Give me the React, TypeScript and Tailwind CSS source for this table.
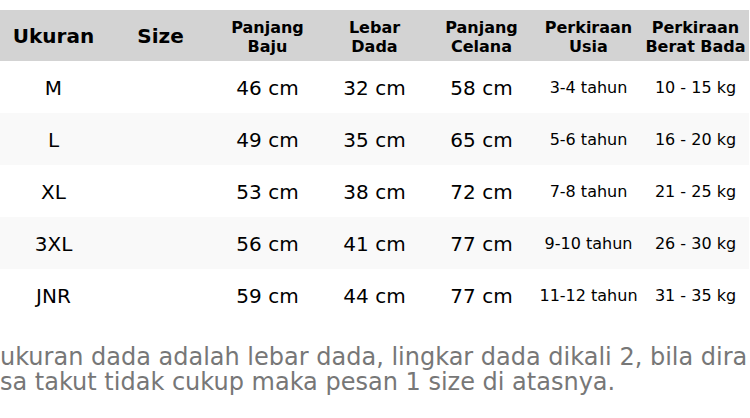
import React from 'react';

const headers = ['Ukuran', 'Size', 'Panjang\nBaju', 'Lebar\nDada', 'Panjang\nCelana', 'Perkiraan\nUsia', 'Perkiraan\nBerat Bada'];

const rows = [
  ['M', '', '46 cm', '32 cm', '58 cm', '3-4 tahun', '10 - 15 kg'],
  ['L', '', '49 cm', '35 cm', '65 cm', '5-6 tahun', '16 - 20 kg'],
  ['XL', '', '53 cm', '38 cm', '72 cm', '7-8 tahun', '21 - 25 kg'],
  ['3XL', '', '56 cm', '41 cm', '77 cm', '9-10 tahun', '26 - 30 kg'],
  ['JNR', '', '59 cm', '44 cm', '77 cm', '11-12 tahun', '31 - 35 kg'],
];

export default function App() {
  return (
    <div className="w-[750px] h-[418px] overflow-hidden bg-white pt-[10px] text-black font-['DejaVu_Sans',sans-serif]">
      <div className="grid grid-cols-[repeat(7,107px)] w-[749px]">
        {headers.map((h, i) => (
          <div
            key={i}
            className={`h-[51px] pt-[2px] bg-[#d3d3d3] flex items-center justify-center text-center font-bold whitespace-pre leading-[19px] ${
              i < 2 ? 'text-[20px]' : 'text-[16px]'
            }`}
          >
            {h}
          </div>
        ))}
        {rows.map((r, ri) =>
          r.map((c, ci) => (
            <div
              key={`${ri}-${ci}`}
              className={`h-[52px] pt-[2px] flex items-center justify-center whitespace-nowrap ${
                ri % 2 === 1 ? 'bg-[#f9f9f9]' : 'bg-white'
              } ${ci < 5 ? 'text-[20px]' : 'text-[16px]'}`}
            >
              {c}
            </div>
          ))
        )}
      </div>
      <div className="mt-[24px] text-[24px] leading-[25px] text-[#777777] whitespace-nowrap">
        <div>ukuran dada adalah lebar dada, lingkar dada dikali 2, bila dira</div>
        <div>sa takut tidak cukup maka pesan 1 size di atasnya.</div>
      </div>
    </div>
  );
}
